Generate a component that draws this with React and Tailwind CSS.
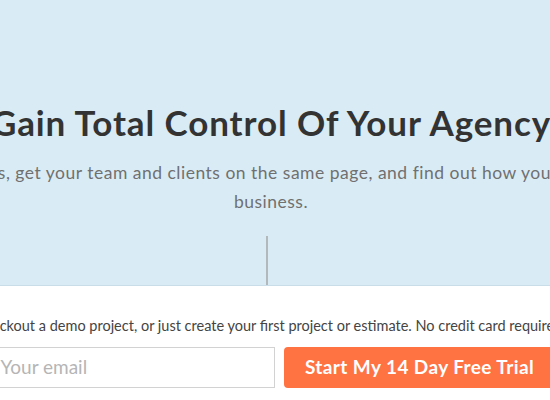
export default function App() {
  return (
    <div className="w-[550px] h-[400px] overflow-hidden bg-white">
      <div className="h-[286px] bg-[#d9ecf6] border-b border-[#c9dde8] flex flex-col items-center">
        <h1 className="mt-[102px] whitespace-nowrap text-[35px] leading-[40px] font-bold tracking-[0.9px] text-[#333] font-['Lato',sans-serif] ml-[-8px]">
          Gain Total Control Of Your Agency
        </h1>
        <p className="mt-[16px] text-center whitespace-nowrap text-[17.5px] leading-[29px] tracking-[0.5px] text-[#707070] font-['Lato',sans-serif] ml-[-8px]">
          Manage projects, get your team and clients on the same page, and find out how you can grow your
          <br />
          business.
        </p>
        <div className="mt-[20px] w-[2px] flex-1 bg-[#b3b8bb] ml-[-16px]" />
      </div>
      <div className="flex flex-col items-center font-['Lato',sans-serif]">
        <p className="mt-[31px] whitespace-nowrap text-[14.5px] leading-[18px] text-[#444] ml-[-10px]">
          Checkout a demo project, or just create your first project or estimate. No credit card required.
        </p>
        <div className="mt-[12px] flex gap-[9px] ml-[-8px]">
          <div className="w-[288px] h-[41px] border border-[#d2d2d2] bg-white flex items-center pl-[13px] text-[19px] text-[#b5b5b5]">
            Your email
          </div>
          <button className="w-[272px] h-[41px] rounded-[4px] bg-[#ff7343] text-white text-[19px] font-bold tracking-[0.4px] flex items-center justify-center">
            Start My 14 Day Free Trial
          </button>
        </div>
      </div>
    </div>
  );
}
